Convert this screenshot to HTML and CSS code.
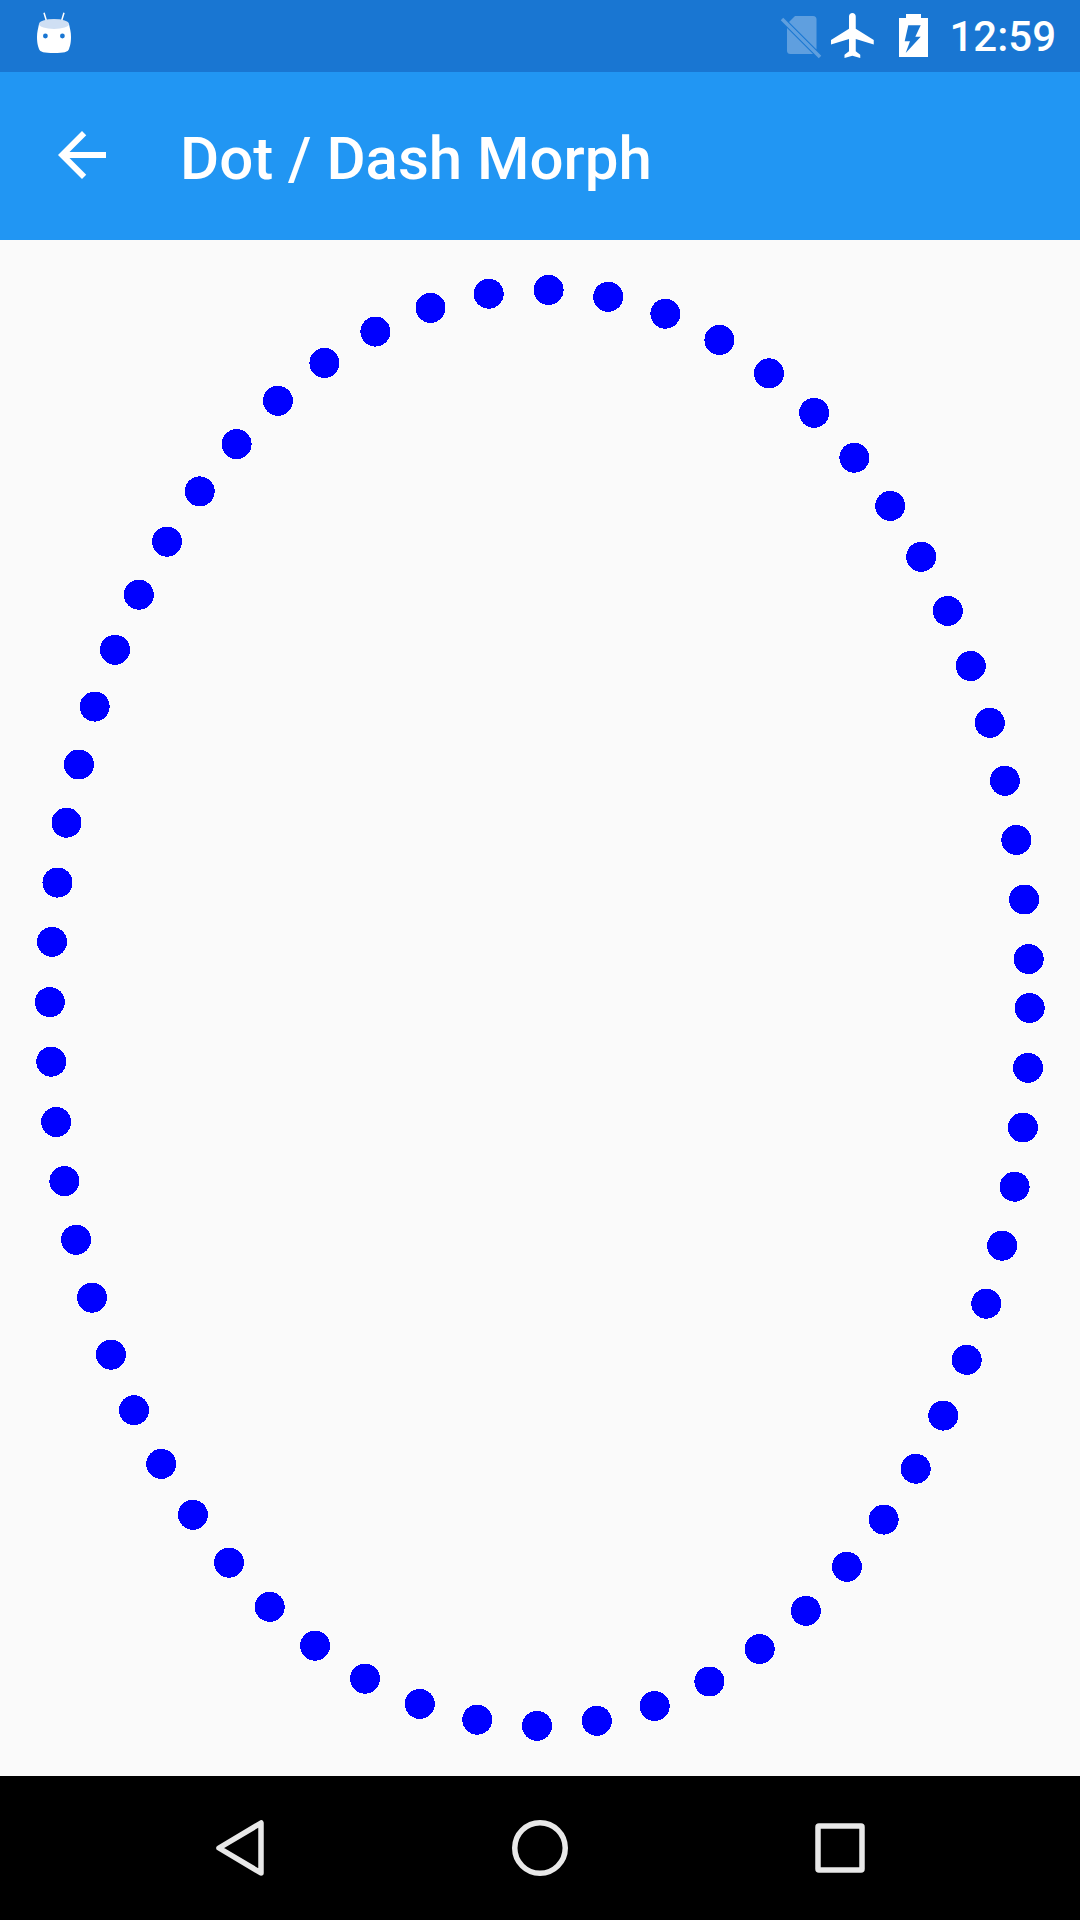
FILE: index.html
```html
<!DOCTYPE html>
<html lang="en">
<head>
  <meta charset="UTF-8" />
  <meta name="viewport" content="width=device-width, initial-scale=1.0"/>
  <title>Dot / Dash Morph</title>
  <link rel="stylesheet" href="styles.css">
</head>
<body>

  <div class="status-bar">
    <svg class="status-cat" viewBox="30 12 48 48">
      <path d="M44 12.7 46.7 21.7M64 12.7 61.3 21.7" stroke="#fff" stroke-width="1.5" fill="none"/>
      <path d="M39 24C38 29 37 32 37 37 37 43 38 46 39 49 40 52 44 53 54 53 64 53 68 52 69 49 70 46 71 43 71 37 71 32 70 29 69 24Z" fill="#fff"/>
      <ellipse cx="54" cy="24" rx="15" ry="5" fill="#cfdff3"/>
      <circle cx="45.4" cy="36" r="2.4" fill="#1976d2"/>
      <circle cx="62.4" cy="36" r="2.4" fill="#1976d2"/>
    </svg>
    <svg class="status-icons" viewBox="776 8 160 56">
      <g fill="#fff" opacity="0.3">
        <path d="M789 22 795 16H813A3.500 3.500 0 0 1 816.500 19.500V49.500Z"/>
        <path d="M787 28 813 54H790.500A3.500 3.500 0 0 1 787 50.500Z"/>
        <path d="M783.250 17.750 821.250 55.750 818.750 58.250 780.750 20.250Z"/>
      </g>
      <path transform="translate(826.500 8.500) scale(2.25)" fill="#fff" d="M21 16v-2l-8-5V3.500c0-.83-.67-1.500-1.500-1.500S10 2.670 10 3.500V9l-8 5v2l8-2.500V19l-2 1.500V22l3.500-1 3.500 1v-1.500L13 19v-5.500l8 2.500z"/>
      <path fill="#fff" fill-rule="evenodd" d="M906 14H921V18H928V57H899V18H906ZM908.300 25.300 904.700 41.300H910L905.700 53 920.700 36.700H915.300L920.700 25.300Z"/>
    </svg>
    <span class="status-time">12:59</span>
  </div>

  <div class="app-bar">
    <svg class="back-arrow" viewBox="0 0 24 24">
      <path fill="#fff" d="M20 11H7.830l5.590-5.590L12 4l-8 8 8 8 1.410-1.410L7.830 13H20v-2z"/>
    </svg>
    <h1 class="app-title">Dot / Dash Morph</h1>
  </div>

  <div class="canvas">
    <svg class="morph" viewBox="0 240 1080 1536">
      <circle cx="548.6" cy="289.9" r="15"/>
      <circle cx="608.2" cy="296.8" r="15"/>
      <circle cx="665.4" cy="313.7" r="15"/>
      <circle cx="719.4" cy="339.9" r="15"/>
      <circle cx="769" cy="373.3" r="15"/>
      <circle cx="814.1" cy="412.9" r="15"/>
      <circle cx="854.4" cy="457.7" r="15"/>
      <circle cx="890.2" cy="505.9" r="15"/>
      <circle cx="921.2" cy="556.8" r="15"/>
      <circle cx="947.8" cy="610.9" r="15"/>
      <circle cx="970.8" cy="666" r="15"/>
      <circle cx="989.8" cy="722.8" r="15"/>
      <circle cx="1004.9" cy="780.8" r="15"/>
      <circle cx="1016.3" cy="839.9" r="15"/>
      <circle cx="1024.2" cy="899.5" r="15"/>
      <circle cx="1028.7" cy="959.1" r="15"/>
      <circle cx="1029.7" cy="1008" r="15"/>
      <circle cx="1028" cy="1067.9" r="15"/>
      <circle cx="1022.8" cy="1127.5" r="15"/>
      <circle cx="1014.6" cy="1186.7" r="15"/>
      <circle cx="1002.2" cy="1245.7" r="15"/>
      <circle cx="986.3" cy="1303.7" r="15"/>
      <circle cx="966.7" cy="1359.8" r="15"/>
      <circle cx="943.3" cy="1415.6" r="15"/>
      <circle cx="915.7" cy="1468.7" r="15"/>
      <circle cx="883.7" cy="1519.6" r="15"/>
      <circle cx="846.9" cy="1566.8" r="15"/>
      <circle cx="805.9" cy="1610.9" r="15"/>
      <circle cx="759.7" cy="1649.1" r="15"/>
      <circle cx="709.4" cy="1681.5" r="15"/>
      <circle cx="654.7" cy="1706" r="15"/>
      <circle cx="596.8" cy="1720.8" r="15"/>
      <circle cx="537" cy="1725.9" r="15"/>
      <circle cx="477.3" cy="1719.7" r="15"/>
      <circle cx="419.8" cy="1703.9" r="15"/>
      <circle cx="365" cy="1678.7" r="15"/>
      <circle cx="315.1" cy="1645.7" r="15"/>
      <circle cx="269.7" cy="1606.8" r="15"/>
      <circle cx="229" cy="1562.7" r="15"/>
      <circle cx="192.9" cy="1514.8" r="15"/>
      <circle cx="161.2" cy="1463.9" r="15"/>
      <circle cx="134" cy="1410.1" r="15"/>
      <circle cx="110.9" cy="1354.7" r="15"/>
      <circle cx="92" cy="1297.7" r="15"/>
      <circle cx="76.1" cy="1239.8" r="15"/>
      <circle cx="64.4" cy="1181.2" r="15"/>
      <circle cx="56.1" cy="1122" r="15"/>
      <circle cx="51.3" cy="1061.7" r="15"/>
      <circle cx="49.9" cy="1002.1" r="15"/>
      <circle cx="52" cy="941.9" r="15"/>
      <circle cx="57.5" cy="882.6" r="15"/>
      <circle cx="66.5" cy="822.7" r="15"/>
      <circle cx="78.9" cy="764.5" r="15"/>
      <circle cx="94.7" cy="706.6" r="15"/>
      <circle cx="115" cy="649.8" r="15"/>
      <circle cx="138.8" cy="594.7" r="15"/>
      <circle cx="167" cy="541.7" r="15"/>
      <circle cx="199.7" cy="491.4" r="15"/>
      <circle cx="236.6" cy="444.2" r="15"/>
      <circle cx="277.9" cy="400.8" r="15"/>
      <circle cx="324.4" cy="362.9" r="15"/>
      <circle cx="375.4" cy="331.6" r="15"/>
      <circle cx="430.5" cy="307.8" r="15"/>
      <circle cx="488.7" cy="293.7" r="15"/>
    </svg>
  </div>

  <div class="nav-bar">
    <div class="nav-button">
      <svg class="nav-icon" viewBox="0 0 72 72">
        <path d="M57 11V61L15 36Z"/>
      </svg>
    </div>
    <div class="nav-button">
      <svg class="nav-icon" viewBox="0 0 72 72">
        <circle cx="36" cy="36" r="25.250"/>
      </svg>
    </div>
    <div class="nav-button">
      <svg class="nav-icon" viewBox="0 0 72 72">
        <rect x="14" y="14" width="44" height="44" rx="1"/>
      </svg>
    </div>
  </div>

</body>
</html>
```

FILE: styles.css
```css
* {
  box-sizing: border-box;
}

body {
  margin: 0;
  width: 1080px;
  height: 1920px;
  display: flex;
  flex-direction: column;
  background: #fafafa;
  font-family: Roboto, sans-serif;
  overflow: hidden;
}

.status-bar {
  height: 72px;
  background: #1976d2;
  display: flex;
  align-items: center;
  color: #ffffff;
  padding: 0 24px 0 30px;
}

.status-cat {
  width: 48px;
  height: 48px;
}

.status-icons {
  width: 160px;
  height: 56px;
  margin-left: auto;
}

.status-time {
  font-size: 42px;
  font-weight: 500;
  margin-left: 13px;
}

.app-bar {
  height: 168px;
  background: #2196f3;
  display: flex;
  align-items: center;
  color: #ffffff;
  padding-left: 46px;
}

.back-arrow {
  width: 72px;
  height: 72px;
  margin-top: -2px;
}

.app-title {
  margin: 4px 0 0 62px;
  font-size: 60px;
  font-weight: 500;
}

.canvas {
  flex: 1;
}

.morph {
  display: block;
  width: 1080px;
  height: 1536px;
}

.morph circle {
  fill: #0000ff;
  shape-rendering: crispEdges;
}

.nav-bar {
  height: 144px;
  background: #000000;
  display: flex;
  justify-content: center;
  align-items: center;
}

.nav-button {
  width: 300px;
  display: flex;
  justify-content: center;
}

.nav-icon {
  width: 72px;
  height: 72px;
  fill: none;
  stroke: #e8e8e8;
  stroke-width: 5.5;
  stroke-linejoin: round;
}
```
